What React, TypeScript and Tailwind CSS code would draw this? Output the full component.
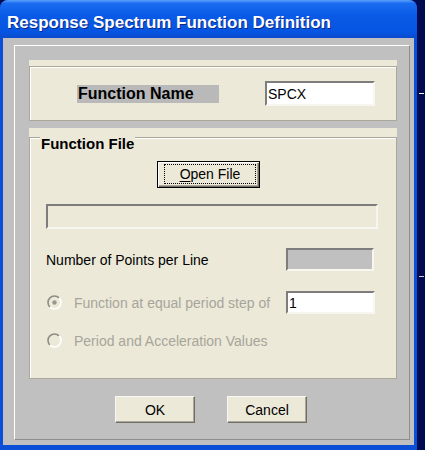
import * as React from 'react';

/** Sunken 3D edit box, classic Win32 look. */
function Field({
  className = '',
  children,
}: {
  className?: string;
  children?: React.ReactNode;
}) {
  return (
    <div
      className={`flex items-center border-2 border-[#f7f6f1] border-l-[#7d7d7d] border-t-[#7d7d7d] text-[14px] leading-none ${className}`}
    >
      {children}
    </div>
  );
}

/** Disabled radio button, drawn as a 15px circle. */
function Radio({ checked = false }: { checked?: boolean }) {
  return (
    <svg width="15" height="15" viewBox="0 0 15 15" className="shrink-0">
      <circle cx="7.5" cy="7.5" r="6.5" fill="#ece9d8" />
      <path
        d="M12.1 2.9 A6.5 6.5 0 0 0 2.9 12.1"
        stroke="#8f8d83"
        strokeWidth="1.6"
        fill="none"
      />
      <path
        d="M2.9 12.1 A6.5 6.5 0 0 0 12.1 2.9"
        stroke="#ffffff"
        strokeWidth="1.6"
        fill="none"
      />
      {checked && <circle cx="7.5" cy="7.5" r="2.2" fill="#9a978c" />}
    </svg>
  );
}

function PushButton({ children }: { children: React.ReactNode }) {
  return (
    <button className="flex h-[27px] w-[80px] items-center justify-center border border-[#f8f7f2] border-b-[#6f6d64] border-r-[#6f6d64] bg-[#ece9d8] text-[14px] leading-none text-black shadow-[inset_-1px_-1px_0_#aca899]">
      {children}
    </button>
  );
}

export default function App() {
  return (
    <div className="relative flex h-[450px] w-[425px] bg-[#000b52] font-['Liberation_Sans',Arial,sans-serif] text-black">
      <div className="flex h-full w-[417px] flex-col rounded-t-[8px] bg-[#0b4fd9]">
        {/* title bar */}
        <div className="h-[38px] rounded-t-[8px] bg-[linear-gradient(180deg,#5aa0fb_0%,#1a6cf0_9%,#0a5ae6_40%,#0655e2_85%,#0a4acd_100%)] pl-[7px] pt-[11px]">
          <span className="text-[17px] font-bold leading-[20px] text-white [text-shadow:1px_1px_0_#0a2788]">
            Response Spectrum Function Definition
          </span>
        </div>

        {/* window body */}
        <div className="mx-[3px] mb-[5px] flex flex-1 flex-col bg-[#c0c0c0] pb-[5px] pl-[11px] pr-[4px] pt-[7px]">
          <div className="flex flex-1 flex-col border border-white border-b-[#8e8e8e] border-r-[#8e8e8e] pl-[14px] pr-[12px] pt-[14px]">
            {/* function name */}
            <div className="h-[61px] bg-[#ece9d8] pt-[6px]">
              <div className="flex h-full items-center border border-[#aca899] pl-[47px] shadow-[inset_1px_1px_0_#fff]">
                <div className="flex h-[18px] w-[142px] items-center bg-[#b9b9b9] pl-[1px] text-[16px] font-bold leading-none">
                  Function Name
                </div>
                <Field className="ml-[46px] h-[25px] w-[110px] bg-white pl-[1px]">
                  SPCX
                </Field>
              </div>
            </div>

            {/* function file */}
            <div className="mt-[7px] h-[251px] bg-[#ece9d8] pt-[9px]">
              <div className="relative flex h-full flex-col border border-[#aca899] pl-[16px] shadow-[inset_1px_1px_0_#fff]">
                <span className="absolute left-[10px] top-[-3px] bg-[#ece9d8] px-[1px] text-[15px] font-bold leading-[17px]">
                  Function File
                </span>

                <button className="ml-[111px] mt-[23px] flex h-[27px] w-[103px] border border-black bg-[#ece9d8] pb-[3px] pl-[6px] pr-[3px] pt-[2px] shadow-[inset_1px_1px_0_#fff,inset_-1px_-1px_0_#716f64,inset_-2px_-2px_0_#aca899]">
                  <span className="flex h-full w-full items-center justify-center border border-dotted border-black text-[14px] leading-none">
                    <span className="underline underline-offset-2">O</span>pen File
                  </span>
                </button>

                <Field className="mt-[16px] h-[25px] w-[332px] bg-[#ece9d8]" />

                <div className="mt-[19px] flex h-[23px] items-center">
                  <span className="w-[240px] text-[14px] leading-none">
                    Number of Points per Line
                  </span>
                  <Field className="h-[23px] w-[88px] bg-[#c0c0c0]" />
                </div>

                <div className="mt-[20px] flex h-[23px] items-center">
                  <span className="flex w-[240px] items-center pl-[1px] text-[14px] leading-none text-[#a7a59b]">
                    <Radio checked />
                    <span className="ml-[12px]">Function at equal period step of</span>
                  </span>
                  <Field className="h-[23px] w-[89px] bg-white pl-[1px]">1</Field>
                </div>

                <div className="mt-[15px] flex h-[23px] items-center pl-[1px] text-[14px] leading-none text-[#a7a59b]">
                  <Radio />
                  <span className="ml-[12px]">Period and Acceleration Values</span>
                </div>
              </div>
            </div>

            {/* dialog buttons */}
            <div className="ml-[86px] mt-[17px] flex gap-[32px]">
              <PushButton>OK</PushButton>
              <PushButton>Cancel</PushButton>
            </div>
          </div>
        </div>
      </div>

      {/* stray marks on the desktop behind the window */}
      <span className="absolute right-[1px] top-[93px] h-[1px] w-[5px] bg-white" />
      <span className="absolute right-[1px] top-[276px] h-[1px] w-[5px] bg-[#d0d0d0]" />
    </div>
  );
}
